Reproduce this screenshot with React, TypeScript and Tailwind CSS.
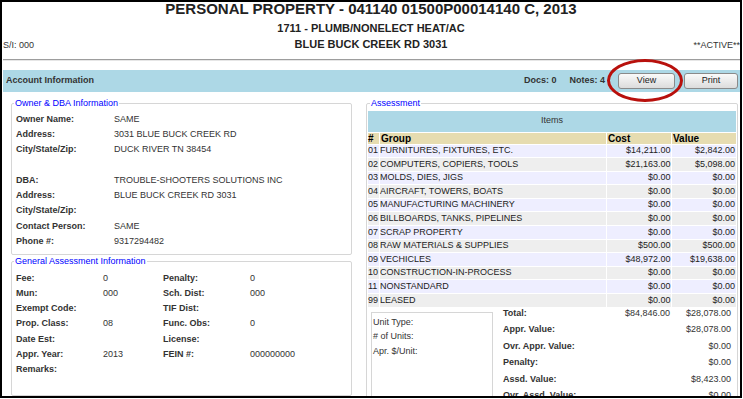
import React from 'react'

const items = [
  ['01', 'FURNITURES, FIXTURES, ETC.', '$14,211.00', '$2,842.00'],
  ['02', 'COMPUTERS, COPIERS, TOOLS', '$21,163.00', '$5,098.00'],
  ['03', 'MOLDS, DIES, JIGS', '$0.00', '$0.00'],
  ['04', 'AIRCRAFT, TOWERS, BOATS', '$0.00', '$0.00'],
  ['05', 'MANUFACTURING MACHINERY', '$0.00', '$0.00'],
  ['06', 'BILLBOARDS, TANKS, PIPELINES', '$0.00', '$0.00'],
  ['07', 'SCRAP PROPERTY', '$0.00', '$0.00'],
  ['08', 'RAW MATERIALS & SUPPLIES', '$500.00', '$500.00'],
  ['09', 'VECHICLES', '$48,972.00', '$19,638.00'],
  ['10', 'CONSTRUCTION-IN-PROCESS', '$0.00', '$0.00'],
  ['11', 'NONSTANDARD', '$0.00', '$0.00'],
  ['99', 'LEASED', '$0.00', '$0.00'],
]

const owner = [
  ['Owner Name:', 'SAME'],
  ['Address:', '3031 BLUE BUCK CREEK RD'],
  ['City/State/Zip:', 'DUCK RIVER TN 38454'],
  ['', ''],
  ['DBA:', 'TROUBLE-SHOOTERS SOLUTIONS INC'],
  ['Address:', 'BLUE BUCK CREEK RD 3031'],
  ['City/State/Zip:', ''],
  ['Contact Person:', 'SAME'],
  ['Phone #:', '9317294482'],
]

const general = [
  ['Fee:', '0', 'Penalty:', '0'],
  ['Mun:', '000', 'Sch. Dist:', '000'],
  ['Exempt Code:', '', 'TIF Dist:', ''],
  ['Prop. Class:', '08', 'Func. Obs:', '0'],
  ['Date Est:', '', 'License:', ''],
  ['Appr. Year:', '2013', 'FEIN #:', '000000000'],
  ['Remarks:', '', '', ''],
]

const totals = [
  ['Total:', '$84,846.00', '$28,078.00'],
  ['Appr. Value:', '', '$28,078.00'],
  ['Ovr. Appr. Value:', '', '$0.00'],
  ['Penalty:', '', '$0.00'],
  ['Assd. Value:', '', '$8,423.00'],
  ['Ovr. Assd. Value:', '', '$0.00'],
]

function Legend({ children }: { children: React.ReactNode }) {
  return (
    <legend className="ml-[2px] px-[1px] text-[9px] leading-[11px] text-[#0000ff]">
      {children}
    </legend>
  )
}

function Button({ label, width }: { label: string; width: string }) {
  return (
    <div
      className={`flex h-[16px] ${width} items-center justify-center rounded-[3px] border border-[#8a8a8a] bg-gradient-to-b from-[#fafafa] to-[#dcdcdc] text-[9px] text-[#222]`}
    >
      {label}
    </div>
  )
}

export default function App() {
  return (
    <div className="relative h-[398px] w-[742px] overflow-hidden border-2 border-black bg-white font-['Liberation_Sans',Arial,sans-serif] text-[#333]">
      <div className="text-center text-[15px] font-bold leading-[14px] text-[#222]">
        PERSONAL PROPERTY - 041140 01500P00014140 C, 2013
      </div>
      <div className="mt-[5px] text-center text-[11px] font-bold leading-[14px] text-[#222]">
        1711 - PLUMB/NONELECT HEAT/AC
      </div>
      <div className="mt-[2px] grid grid-cols-[1fr_auto_1fr] items-baseline leading-[14px]">
        <span className="pl-[1px] text-[9px]">S/I: 000</span>
        <span className="text-[11px] font-bold text-[#222]">BLUE BUCK CREEK RD 3031</span>
        <span className="text-right text-[9px]">**ACTIVE**</span>
      </div>
      <div className="ml-[1px] mt-[7px] h-[2px] border-t border-b border-t-[#9d9d9d] border-b-[#e6e6e6]" />

      <div className="ml-[1px] mt-[9px] flex h-[22px] items-center bg-[#add8e6] pl-[3px] pr-[2px] text-[9px] font-bold">
        <span>Account Information</span>
        <span className="ml-auto">Docs: 0</span>
        <span className="ml-[13px]">Notes: 4</span>
        <div className="ml-[13px] font-normal">
          <Button label="View" width="w-[57px]" />
        </div>
        <div className="ml-[9px] font-normal">
          <Button label="Print" width="w-[54px]" />
        </div>
      </div>

      <div className="mt-[6px] flex gap-[14px] pl-[9px] pr-[2px] text-[9px]">
        <div className="flex w-[341px] flex-col">
          <fieldset className="rounded-[2px] border border-[#d6d6d6] pb-[5px] pt-[3px]">
            <Legend>Owner &amp; DBA Information</Legend>
            {owner.map(([label, value], i) => (
              <div key={i} className="flex h-[15.25px] items-center pl-[4px]">
                <span className="w-[98px] font-bold">{label}</span>
                <span>{value}</span>
              </div>
            ))}
          </fieldset>

          <fieldset className="mt-[1px] rounded-[2px] border border-[#d6d6d6] pb-[17px] pt-[3.5px]">
            <Legend>General Assessment Information</Legend>
            {general.map(([l1, v1, l2, v2], i) => (
              <div
                key={i}
                className="grid h-[15.25px] grid-cols-[87px_60px_87px_1fr] items-center pl-[4px]"
              >
                <span className="font-bold">{l1}</span>
                <span>{v1}</span>
                <span className="font-bold">{l2}</span>
                <span>{v2}</span>
              </div>
            ))}
          </fieldset>
        </div>

        <fieldset className="w-[372px] rounded-[2px] border border-[#d6d6d6] px-[1px] pt-[1.5px]">
          <Legend>Assessment</Legend>
          <div className="mb-[1px] flex h-[21px] items-center justify-center bg-[#add8e6] text-[#333]">
            Items
          </div>
          <div className="grid grid-cols-[11px_226px_64px_1fr] gap-[1px] text-[#222]">
            <div className="flex h-[11px] items-center bg-[#e6dcb0] text-[10px] font-bold text-black">
              #
            </div>
            <div className="flex h-[11px] items-center bg-[#e6dcb0] pl-[1px] text-[10px] font-bold text-black">
              Group
            </div>
            <div className="flex h-[11px] items-center bg-[#e6dcb0] pl-[1px] text-[10px] font-bold text-black">
              Cost
            </div>
            <div className="flex h-[11px] items-center bg-[#e6dcb0] pl-[1px] text-[10px] font-bold text-black">
              Value
            </div>
            {items.map(([num, group, cost, value], i) => {
              const bg = i % 2 === 0 ? 'bg-[#eeeeff]' : 'bg-[#eeeeee]'
              return (
                <React.Fragment key={num}>
                  <div className={`flex h-[12.6px] items-center ${bg}`}>{num}</div>
                  <div className={`flex h-[12.6px] items-center ${bg}`}>{group}</div>
                  <div className={`flex h-[12.6px] items-center justify-end pr-[0.5px] ${bg}`}>
                    {cost}
                  </div>
                  <div className={`flex h-[12.6px] items-center justify-end pr-[1px] ${bg}`}>
                    {value}
                  </div>
                </React.Fragment>
              )
            })}
          </div>

          <div className="flex">
            <div className="ml-[3px] mt-[5px] h-[120px] w-[122px] border border-[#d6d6d6] pl-[1px] pt-[2px] leading-[14.5px]">
              <div>Unit Type:</div>
              <div># of Units:</div>
              <div>Apr. $/Unit:</div>
            </div>
            <div className="ml-[10px] flex-1 pr-[5px]">
              {totals.map(([label, cost, value]) => (
                <div
                  key={label}
                  className="grid h-[16.5px] grid-cols-[1fr_64px_61px] leading-[13.5px]"
                >
                  <span className="font-bold">{label}</span>
                  <span className="text-right">{cost}</span>
                  <span className="text-right">{value}</span>
                </div>
              ))}
            </div>
          </div>
        </fieldset>
      </div>

      <div className="absolute left-[605px] top-[57px] h-[43px] w-[76px] rounded-[50%] border-[3px] border-[#b8100c]" />
    </div>
  )
}
